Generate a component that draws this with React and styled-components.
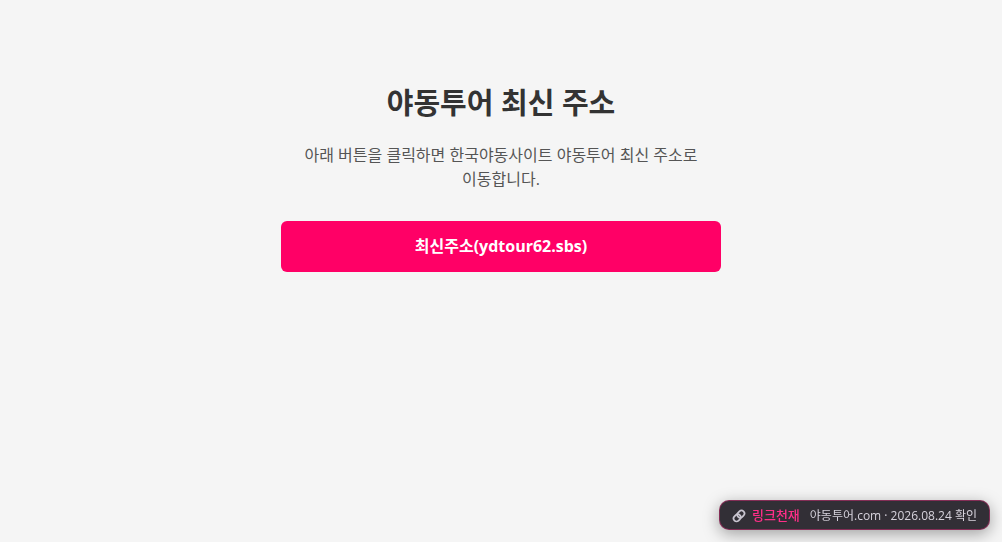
import React from "react";
import styled, { createGlobalStyle } from "styled-components";

export default function App() {
  return (
    <>
      <GlobalStyle />
      <Main>
        <Title>야동투어 최신 주소</Title>
        <Description>
          아래 버튼을 클릭하면 한국야동사이트 야동투어 최신 주소로 이동합니다.
        </Description>
        <AddressLink href="#">최신주소(ydtour62.sbs)</AddressLink>
      </Main>
      <Badge>
        <LinkIcon />
        <Brand>링크천재</Brand>
        <span>야동투어.com · 2026.08.24 확인</span>
      </Badge>
    </>
  );
}

const LinkIcon = () => (
  <Icon viewBox="0 0 24 24" aria-hidden="true">
    <g transform="rotate(-45 12 12)">
      <rect x="1" y="7" width="13" height="10" rx="5" />
      <rect x="10" y="7" width="13" height="10" rx="5" />
    </g>
  </Icon>
);

const GlobalStyle = createGlobalStyle`
  * {
    box-sizing: border-box;
  }

  body {
    margin: 0;
    background: #f5f5f5;
    color: #333;
    font-family: "Open Sans", "Noto Sans CJK KR", sans-serif;
  }
`;

const Main = styled.main`
  width: 100%;
  max-width: 480px;
  margin: 0 auto;
  padding: 80px 20px 40px;
  text-align: center;
`;

const Title = styled.h1`
  margin: 0 0 18px;
  font-size: 29px;
  line-height: 45px;
  font-weight: 700;
`;

const Description = styled.p`
  margin: 0 0 30px;
  padding: 0 20px;
  color: #555;
  font-size: 16px;
  line-height: 24px;
`;

const AddressLink = styled.a`
  display: block;
  padding: 14px;
  border-radius: 6px;
  background: #ff0066;
  color: #fff;
  font-size: 16px;
  line-height: 23px;
  font-weight: 700;
  text-decoration: none;
`;

const Badge = styled.aside`
  position: fixed;
  right: 12px;
  bottom: 12px;
  display: flex;
  align-items: baseline;
  padding: 5px 12px 4px;
  border: 1px solid rgba(255, 46, 136, 0.4);
  border-radius: 10px;
  background: #322f36;
  color: #d6d2dc;
  font-size: 12px;
  line-height: 18px;
  white-space: nowrap;
  box-shadow: 0 4px 16px rgba(0, 0, 0, 0.35);
`;

const Icon = styled.svg`
  align-self: center;
  width: 14px;
  height: 14px;
  margin-right: 6px;
  fill: none;
  stroke: #c9c5d0;
  stroke-width: 3;
`;

const Brand = styled.strong`
  margin-right: 10px;
  color: #ff2e88;
  font-size: 13px;
  font-weight: 500;
`;
